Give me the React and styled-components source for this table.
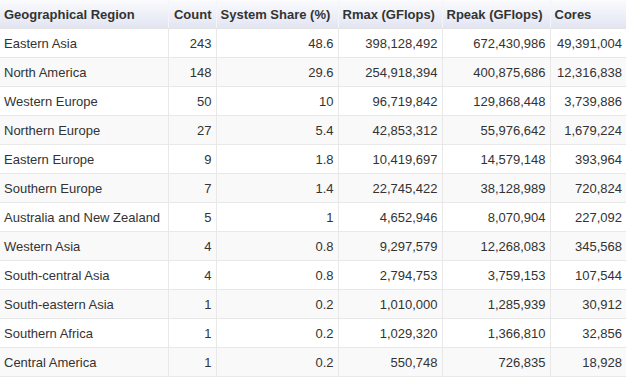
import React from "react";
import styled, { createGlobalStyle } from "styled-components";

const Global = createGlobalStyle`
  html, body { margin: 0; padding: 0; background: #fff; }
  body { font-family: "Liberation Sans", Arial, sans-serif; }
`;

const Table = styled.table`
  border-collapse: collapse;
  table-layout: fixed;
  width: 626px;
  font-size: 13px;
  color: #333;
`;

const Th = styled.th`
  height: 28px;
  padding: 0 4px;
  text-align: ${(p) => (p.$right ? "right" : "left")};
  font-size: 13px;
  font-weight: bold;
  color: #333;
  background: linear-gradient(to bottom, #fbfbfd 0%, #eef0f8 50%, #e2e5f2 100%);
  border-right: 1px solid #f4f5fa;
  border-bottom: 1px solid #e4e4e4;
  white-space: nowrap;
  overflow: hidden;
  &:last-child { border-right: none; }
`;

const Tr = styled.tr`
  background: ${(p) => (p.$alt ? "#f9f9f9" : "#ffffff")};
`;

const Td = styled.td`
  height: 28px;
  padding: 0 4px 0 4px;
  text-align: ${(p) => (p.$right ? "right" : "left")};
  border-right: 1px solid #e8e8e8;
  border-bottom: 1px solid #e8e8e8;
  white-space: nowrap;
  overflow: hidden;
  &:last-child { border-right: none; }
`;

const cols = [168, 48, 122, 104, 108, 76];
const headers = [
  ["Geographical Region", false],
  ["Count", true],
  ["System Share (%)", false],
  ["Rmax (GFlops)", false],
  ["Rpeak (GFlops)", false],
  ["Cores", false],
];

const rows = [
  ["Eastern Asia", "243", "48.6", "398,128,492", "672,430,986", "49,391,004"],
  ["North America", "148", "29.6", "254,918,394", "400,875,686", "12,316,838"],
  ["Western Europe", "50", "10", "96,719,842", "129,868,448", "3,739,886"],
  ["Northern Europe", "27", "5.4", "42,853,312", "55,976,642", "1,679,224"],
  ["Eastern Europe", "9", "1.8", "10,419,697", "14,579,148", "393,964"],
  ["Southern Europe", "7", "1.4", "22,745,422", "38,128,989", "720,824"],
  ["Australia and New Zealand", "5", "1", "4,652,946", "8,070,904", "227,092"],
  ["Western Asia", "4", "0.8", "9,297,579", "12,268,083", "345,568"],
  ["South-central Asia", "4", "0.8", "2,794,753", "3,759,153", "107,544"],
  ["South-eastern Asia", "1", "0.2", "1,010,000", "1,285,939", "30,912"],
  ["Southern Africa", "1", "0.2", "1,029,320", "1,366,810", "32,856"],
  ["Central America", "1", "0.2", "550,748", "726,835", "18,928"],
];

export default function App() {
  return (
    <>
      <Global />
      <Table>
        <colgroup>
          {cols.map((w, i) => (
            <col key={i} style={{ width: w }} />
          ))}
        </colgroup>
        <thead>
          <tr>
            {headers.map(([h, r]) => (
              <Th key={h} $right={r}>{h}</Th>
            ))}
          </tr>
        </thead>
        <tbody>
          {rows.map((row, i) => (
            <Tr key={row[0]} $alt={i % 2 === 1}>
              {row.map((c, j) => (
                <Td key={j} $right={j > 0}>{c}</Td>
              ))}
            </Tr>
          ))}
        </tbody>
      </Table>
    </>
  );
}
